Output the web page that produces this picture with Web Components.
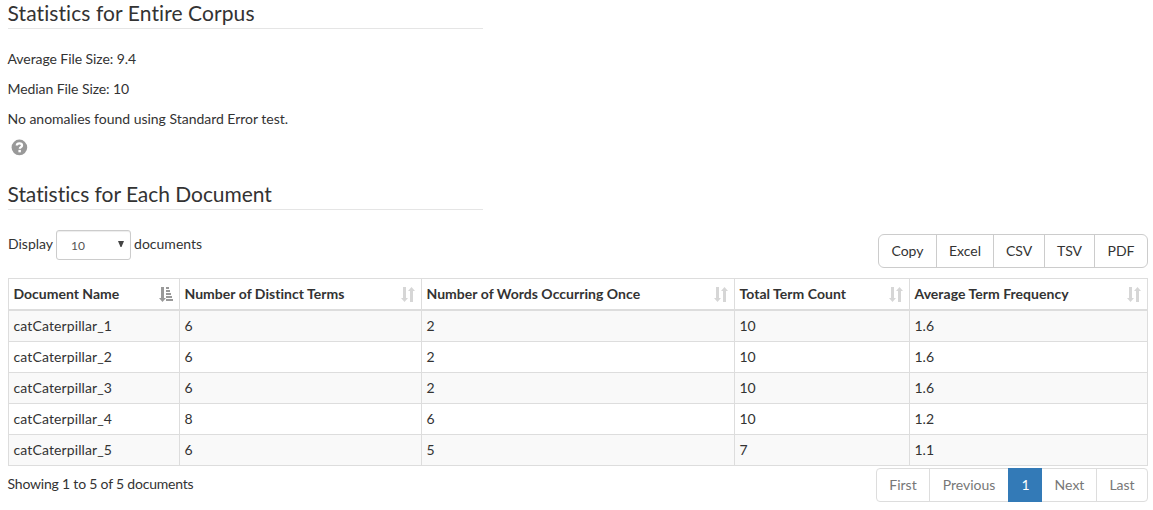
<!DOCTYPE html>
<html lang="en">
<head>
<meta charset="utf-8">
<title>Corpus Statistics</title>
<style>
html,body{margin:0;background:#fff}
body{font:14px/20px Lato,"Liberation Sans",sans-serif;font-variant-ligatures:none;color:#333;height:510px;overflow:hidden}
</style>
</head>
<body>
<corpus-statistics></corpus-statistics>
<script>
class Base extends HTMLElement {
  constructor() {
    super();
    this.attachShadow({ mode: "open" });
  }
  connectedCallback() {
    this.shadowRoot.innerHTML = this.render();
  }
}

customElements.define("section-legend", class extends Base {
  render() {
    return `<style>
      :host{display:block;width:475px;box-sizing:border-box;height:31px;border-bottom:1px solid #e5e5e5;font-size:21px;line-height:30px;white-space:nowrap;text-indent:-.5px}
    </style><slot></slot>`;
  }
});

customElements.define("help-icon", class extends Base {
  render() {
    return `<style>:host{display:block;width:17px;height:16px}svg{display:block;overflow:visible}</style>
    <svg width="16" height="16" viewBox="0 0 16 16"><g transform="translate(.2 .6)"><circle cx="8.2" cy="7.8" r="7.8" fill="#999"/>
    <path d="M5.6 5.9C5.7 4.4 6.7 3.7 8.2 3.7c1.6 0 2.6.9 2.6 2.1 0 1.8-2.2 1.8-2.2 3.4" fill="none" stroke="#fff" stroke-width="2.3"/>
    <rect x="7.2" y="10.3" width="2.5" height="2.4" fill="#fff"/></g></svg>`;
  }
});

customElements.define("sort-icon", class extends Base {
  render() {
    const asc = this.getAttribute("state") === "asc";
    const shapes = asc
      ? `<path d="M2 0h3v11h2L3.5 15 0 11h2z"/><path d="M7 0h3v2H7zM7 3h4v2H7zM7 6h5v2H7zM7 9h6v2H7zM7 12h7v2H7z"/>`
      : `<path d="M2 0h3v11h2L3.5 15 0 11h2z"/><path d="M9 15h3V4h2l-3.5-4L7 4h2z"/>`;
    return `<style>:host{display:block;width:14px;height:15px}svg{display:block;fill:currentColor}</style>
    <svg width="14" height="15" viewBox="0 0 14 15">${shapes}</svg>`;
  }
});

customElements.define("length-select", class extends Base {
  render() {
    return `<style>
      :host{display:flex;box-sizing:border-box;width:75px;height:30px;border:1px solid #ccc;border-radius:3px;box-shadow:inset 0 1px 1px rgba(0,0,0,.075);
        align-items:center;justify-content:space-between;padding:2px 6px 0 14px;font-size:12px;color:#555;line-height:18px}
      svg{display:block;margin-top:-4px}
    </style><slot></slot><svg width="6" height="6" viewBox="0 0 6 6"><path d="M0 0h6L3.5 6h-1z" fill="#444"/></svg>`;
  }
});

customElements.define("button-strip", class extends Base {
  render() {
    const items = this.getAttribute("items").split(",");
    const widths = this.getAttribute("widths").split(",");
    const active = this.getAttribute("active");
    return `<style>
      :host{display:flex;box-sizing:border-box;height:34px;border:1px solid var(--line);border-radius:var(--radius);color:var(--ink)}
      span{box-sizing:border-box;height:32px;line-height:32px;text-align:center;border-left:1px solid var(--line)}
      span:first-of-type{border-left:0}
      .on{background:#337ab7;border-color:#337ab7;color:#fff;height:34px;margin-top:-1px;line-height:34px}
      .on+span{border-left-color:transparent}
    </style>${items.map((t, i) => `<span class="${t === active ? "on" : ""}" style="width:${widths[i]}px">${t}</span>`).join("")}`;
  }
});

customElements.define("stats-table", class extends Base {
  render() {
    const heads = ["Document Name", "Number of Distinct Terms", "Number of Words Occurring Once", "Total Term Count", "Average Term Frequency"];
    const rows = [
      ["catCaterpillar_1", "6", "2", "10", "1.6"],
      ["catCaterpillar_2", "6", "2", "10", "1.6"],
      ["catCaterpillar_3", "6", "2", "10", "1.6"],
      ["catCaterpillar_4", "8", "6", "10", "1.2"],
      ["catCaterpillar_5", "6", "5", "7", "1.1"]
    ];
    return `<style>
      :host{display:block;box-sizing:border-box;width:1140px;border:solid #ddd;border-width:1px 0 0 1px}
      .row{display:grid;grid-template-columns:171px 242px 313px 175px 238px}
      .row>div{box-sizing:border-box;height:31px;padding:5px 6px 5px 4.5px;border:solid #ddd;border-width:0 1px 1px 0;white-space:nowrap}
      .row>div:first-child{letter-spacing:.12px}
      .row.head>div{height:32px;border-bottom-width:2px;font-weight:700;display:flex;justify-content:space-between;letter-spacing:.03px}
      .row.head>div:first-child{letter-spacing:0}
      .row:nth-of-type(even){background:#f9f9f9}
      sort-icon{color:#d6d6d6;margin-top:3px}
      sort-icon[state=asc]{color:#999}
    </style>
    <div class="row head">${heads.map((h, i) => `<div>${h}<sort-icon state="${i ? "both" : "asc"}"></sort-icon></div>`).join("")}</div>
    ${rows.map(r => `<div class="row">${r.map(c => `<div>${c}</div>`).join("")}</div>`).join("")}`;
  }
});

customElements.define("corpus-statistics", class extends Base {
  render() {
    return `<style>
      :host{display:block;padding:0 5px 0 8px}
      .first{margin-top:-2px;letter-spacing:.09px}
      p{margin:0 0 10px;text-indent:-.5px;letter-spacing:-.07px}
      p:last-child{letter-spacing:-.02px}
      .summary{padding-top:20px}
      help-icon{margin:0 0 0 3px}
      .second{margin-top:24px;letter-spacing:-.04px}
      .tools{display:flex;justify-content:space-between;height:68px;box-sizing:border-box;padding-top:20px}
      .display{display:flex;gap:3px;height:30px;line-height:28px}
      .export{--line:#ccc;--radius:6px;--ink:#333;margin-top:4px}
      .foot{display:flex;justify-content:space-between;padding-top:2px}
      .info{padding-top:6px;letter-spacing:-.2px;text-indent:-.5px}
      .pages{--line:#ddd;--radius:4px;--ink:#777}
    </style>
    <section-legend class="first">Statistics for Entire Corpus</section-legend>
    <div class="summary"><p>Average File Size: 9.4</p><p>Median File Size: 10</p><p>No anomalies found using Standard Error test.</p></div>
    <help-icon></help-icon>
    <section-legend class="second">Statistics for Each Document</section-legend>
    <div class="tools">
      <div class="display"><span>Display</span><length-select>10</length-select><span>documents</span></div>
      <button-strip class="export" items="Copy,Excel,CSV,TSV,PDF" widths="57,57,51,50,53"></button-strip>
    </div>
    <stats-table></stats-table>
    <div class="foot"><div class="info">Showing 1 to 5 of 5 documents</div>
    <button-strip class="pages" items="First,Previous,1,Next,Last" widths="52,79,34,54,51" active="1"></button-strip></div>`;
  }
});
</script>
</body>
</html>
